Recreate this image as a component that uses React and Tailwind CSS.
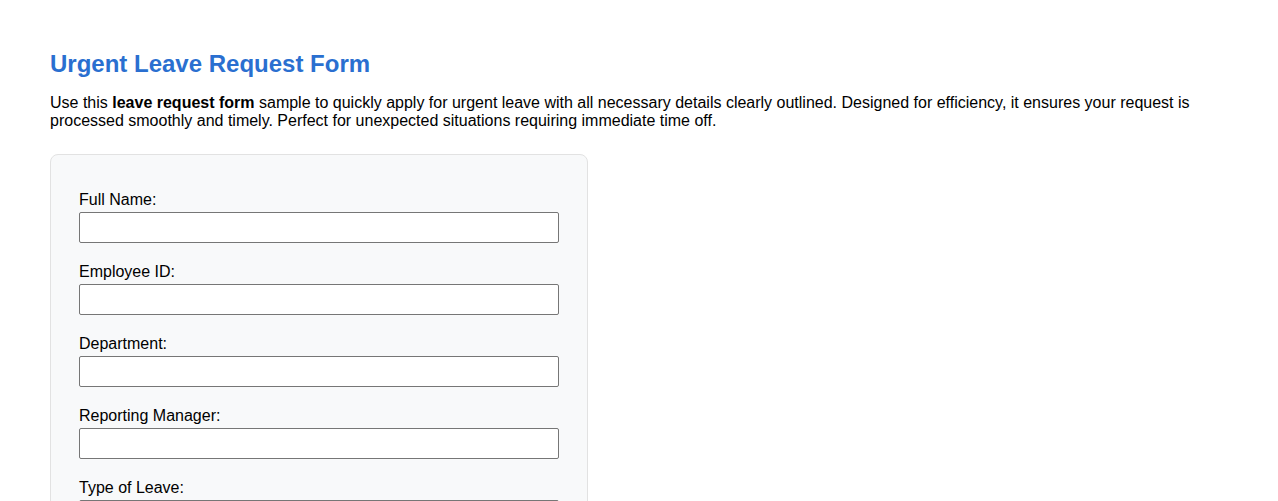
import React from "react";

const fields = ["Full Name:", "Employee ID:", "Department:", "Reporting Manager:"];

export default function App() {
  return (
    <div className="bg-white px-[50px] pt-[50px] pb-10 text-black" style={{ fontFamily: '"Liberation Sans", Arial, sans-serif' }}>
      <h1 className="text-[24px] leading-[28px] font-bold text-[#2a6fd0]">Urgent Leave Request Form</h1>
      <p className="mt-[16px] text-[16px] leading-[18.4px]">
        Use this <strong>leave request form</strong> sample to quickly apply for urgent leave with all necessary details clearly outlined. Designed for efficiency, it ensures your request is processed smoothly and timely. Perfect for unexpected situations requiring immediate time off.
      </p>
      <div className="mt-[23px] w-[538px] rounded-[8px] border border-[#e2e2e2] bg-[#f8f9fa] px-[28px] pt-[36px] pb-[28px]">
        {fields.map((f) => (
          <div key={f} className="mb-[20px]">
            <label className="block text-[16px] leading-[18px] mb-[3px]">{f}</label>
            <input type="text" className="block h-[31px] w-[480px] border border-[#767676] rounded-[2px] bg-white px-[6px]" />
          </div>
        ))}
        <div className="mb-[20px]">
          <label className="block text-[16px] leading-[18px] mb-[3px]">Type of Leave:</label>
          <select className="block h-[31px] w-[480px] border border-[#767676] rounded-[2px] bg-white px-[4px]">
            <option>Emergency Leave</option>
          </select>
        </div>
      </div>
    </div>
  );
}
